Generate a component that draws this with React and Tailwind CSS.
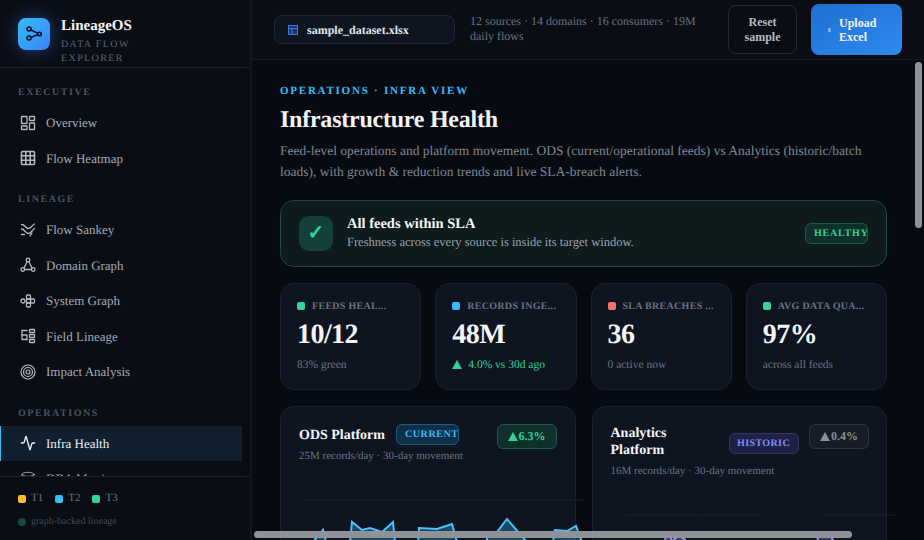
import React from "react";
import { Activity, Database, Server, Shield } from "lucide-react";

const Ico = ({ children, sw = 1.3 }) => (
  <svg width="16" height="16" viewBox="0 0 16 16" fill="none" stroke="currentColor" strokeWidth={sw} strokeLinecap="round" strokeLinejoin="round">
    {children}
  </svg>
);

const OverviewIcon = () => (
  <Ico>
    <rect x="1.500" y="1.500" width="5.500" height="7" rx="0.600" />
    <rect x="9.500" y="1.500" width="5" height="4" rx="0.600" />
    <rect x="9.500" y="8" width="5" height="6.500" rx="0.600" />
    <rect x="1.500" y="11" width="5.500" height="3.500" rx="0.600" />
  </Ico>
);

const HeatmapIcon = () => (
  <Ico sw={1.6}>
    <rect x="1.500" y="1.500" width="13" height="13" rx="1" />
    <path d="M5.800 1.500v13M10.200 1.500v13M1.500 5.800h13M1.500 10.200h13" />
  </Ico>
);

const SankeyIcon = () => (
  <Ico>
    <path d="M1.500 2.500c4 0 4 4 7 4s3-3 6-4.500" />
    <path d="M1.500 7c3 0 4 4.500 7 4.500s3-3 6-5" />
    <path d="M1.500 12.500h3M12 11l-2 3" />
  </Ico>
);

const DomainIcon = () => (
  <Ico>
    <circle cx="8" cy="3" r="1.800" />
    <circle cx="2.800" cy="12.500" r="1.800" />
    <circle cx="13.200" cy="12.500" r="1.800" />
    <path d="M7 5 4 11M9 5l3 6M5 12.500h6" />
  </Ico>
);

const SystemIcon = () => (
  <Ico>
    <circle cx="3" cy="8" r="2" />
    <rect x="6.500" y="2" width="4" height="4" rx="1" />
    <rect x="6.500" y="6" width="4" height="4" rx="1" />
    <rect x="6.500" y="10" width="4" height="4" rx="1" />
    <rect x="10.500" y="6" width="4" height="4" rx="1" />
  </Ico>
);

const FieldIcon = () => (
  <Ico>
    <path d="M7 2.500H2v9h5" />
    <path d="M2 7h5v4.500" />
    <rect x="9.500" y="1.500" width="5" height="3" rx="0.500" />
    <rect x="9.500" y="6.500" width="5" height="3" rx="0.500" />
    <rect x="9.500" y="11.500" width="5" height="3" rx="0.500" />
  </Ico>
);

const ImpactIcon = () => (
  <Ico sw={1.2}>
    <circle cx="8" cy="8" r="7" />
    <circle cx="8" cy="8" r="4.500" />
    <circle cx="8" cy="8" r="2" />
  </Ico>
);

const Triangle = ({ className }) => (
  <svg width="10" height="9" viewBox="0 0 10 9" className={className}>
    <path d="M5 0 10 9H0Z" fill="currentColor" />
  </svg>
);

const navGroups = [
  {
    label: "EXECUTIVE",
    items: [
      { name: "Overview", icon: <OverviewIcon /> },
      { name: "Flow Heatmap", icon: <HeatmapIcon /> },
    ],
  },
  {
    label: "LINEAGE",
    items: [
      { name: "Flow Sankey", icon: <SankeyIcon /> },
      { name: "Domain Graph", icon: <DomainIcon /> },
      { name: "System Graph", icon: <SystemIcon /> },
      { name: "Field Lineage", icon: <FieldIcon /> },
      { name: "Impact Analysis", icon: <ImpactIcon /> },
    ],
  },
  {
    label: "OPERATIONS",
    items: [
      { name: "Infra Health", icon: <Activity size={16} strokeWidth={2} />, active: true },
      { name: "DBA Metrics", icon: <Database size={16} strokeWidth={1.3} /> },
      { name: "Feed Monitor", icon: <Server size={16} strokeWidth={1.3} /> },
      { name: "Governance", icon: <Shield size={16} strokeWidth={1.3} /> },
    ],
  },
];

const kpis = [
  { label: "FEEDS HEAL...", value: "10/12", sub: "83% green", dot: "bg-[#34d399]" },
  { label: "RECORDS INGE...", value: "48M", sub: "4.0% vs 30d ago", dot: "bg-[#38bdf8]", up: true },
  { label: "SLA BREACHES ...", value: "36", sub: "0 active now", dot: "bg-[#f87171]" },
  { label: "AVG DATA QUA...", value: "97%", sub: "across all feeds", dot: "bg-[#34d399]" },
];

const odsShapes = [
  "14,62 24,50 27,62",
  "51,62 53,42 63,50 71,48 83,52 94,42 96,62",
  "119,62 120,48 138,49 153,44 158,62",
  "188,62 188,53 198,52 208,39 228,62",
  "254,62 256,50 268,51 277,46 283,62",
];

const analyticsShapes = ["54,44 56,37 61,44", "62,44 68,40 75,44", "206,44 209,39 219,39 222,44"];

const Legend = ({ color, label }) => (
  <span className="flex items-center gap-[5px]">
    <span className={`w-2 h-2 rounded-[2px] ${color}`} />
    {label}
  </span>
);

export default function App() {
  return (
    <div className="flex w-[924px] h-[540px] overflow-hidden bg-[#070b11] text-white font-['Liberation_Serif',serif] [text-rendering:geometricPrecision]">
      {/* Sidebar */}
      <aside className="flex flex-col w-[252px] shrink-0 bg-[#0a0d14] border-r-2 border-[#111722]">
        <div className="flex gap-[11px] h-[68px] shrink-0 pl-[18px] pt-[18px] border-b border-[#1a202c] overflow-hidden">
          <div className="flex items-center justify-center w-8 h-8 shrink-0 rounded-lg bg-gradient-to-br from-[#38bdf8] to-[#3b82f6] shadow-[0_0_18px_rgba(59,130,246,0.45)] text-[#0a1220]">
            <svg width="18" height="18" viewBox="0 0 18 18" fill="none" stroke="currentColor" strokeWidth="1.500">
              <circle cx="4" cy="4" r="2" />
              <circle cx="4" cy="13" r="2" />
              <circle cx="14.500" cy="9" r="1.800" />
              <path d="m6 5 6.500 3.200M6 12.500 12.700 9.500" />
            </svg>
          </div>
          <div className="-mt-[2px]">
            <div className="text-[15px] leading-[20px] font-bold text-[#f3f4f6]">LineageOS</div>
            <div className="mt-[2px] w-[90px] text-[10px] leading-[13.500px] tracking-[0.14em] text-[#5b6472]">DATA FLOW EXPLORER</div>
          </div>
        </div>

        <nav className="flex-1 overflow-hidden pt-[18px] border-r-8 border-[#080b11]">
          {navGroups.map((group) => (
            <div key={group.label} className="mb-[17.100px]">
              <div className="pl-[18px] h-[14px] leading-[14px] mb-[5px] text-[10px] font-bold tracking-[0.155em] text-[#4b5360]">{group.label}</div>
              {group.items.map((item) => (
                <div
                  key={item.name}
                  className={`flex items-center gap-[10px] h-[35.500px] pl-[19px] text-[13px] border-l ${
                    item.active ? "bg-[#10202f] border-[#38bdf8] text-[#e8edf3]" : "border-transparent text-[#a3aab5]"
                  }`}
                >
                  <span className={item.active ? "text-[#e8edf3]" : "text-[#b4bac3]"}>{item.icon}</span>
                  {item.name}
                </div>
              ))}
            </div>
          ))}
        </nav>

        <div className="h-[64px] shrink-0 border-t border-[#1a202c] pl-[18px] pt-[15px]">
          <div className="flex gap-3 text-[11px] leading-[13px] text-[#6b7280]">
            <Legend color="bg-[#fbbf24]" label="T1" />
            <Legend color="bg-[#38bdf8]" label="T2" />
            <Legend color="bg-[#34d399]" label="T3" />
          </div>
          <div className="flex items-center gap-[5px] mt-[10px] text-[10px] leading-[13px] text-[#414956]">
            <span className="w-2 h-2 rounded-full bg-[#0f4f40]" />
            graph-backed lineage
          </div>
        </div>
      </aside>

      <div className="flex flex-col flex-1 min-w-0">
        {/* Top bar */}
        <header className="flex items-center h-[60px] shrink-0 pl-[22px] bg-[#0a0d14] border-b border-[#161c27]">
          <div className="flex items-center gap-[9px] w-[181px] h-[29px] shrink-0 pl-[13px] rounded-lg bg-[#0f1520] border border-[#1e2633] text-[12px] font-bold text-[#e5e7eb]">
            <svg width="10" height="10" viewBox="0 0 10 10" fill="#1b3566" stroke="#3f74dd" strokeWidth="1">
              <rect x="0.500" y="0.500" width="9" height="9" />
              <path d="M0.500 3.500h9M4 3.500v6" />
            </svg>
            sample_dataset.xlsx
          </div>
          <p className="w-[240px] ml-[15px] -mt-[2px] shrink-0 text-[12px] leading-[15px] text-[#6b7280]">12 sources · 14 domains · 16 consumers · 19M daily flows</p>
          <button className="w-[69px] h-[49px] ml-[18px] shrink-0 rounded-lg border border-[#232a36] text-[12px] leading-[15px] font-bold text-[#b4bac3]">
            Reset<br />sample
          </button>
          <button className="flex items-center gap-2 w-[91px] h-[51px] ml-[14px] pl-[17px] shrink-0 rounded-lg bg-gradient-to-br from-[#1e6fd0] to-[#2f8af0] text-[12px] leading-[14px] font-bold text-left text-[#f3f4f6]">
            <span className="w-[3px] h-[4px] rounded-[1px] bg-[#7fb6f0]" />
            <span>Upload<br />Excel</span>
          </button>
        </header>

        {/* Main content; scrollbars are painted over it */}
        <div className="relative flex-1 min-h-0">
          <main className="h-full overflow-hidden">
            <div className="w-[736px] h-[1385px] pt-[24px] pl-[28px]">
              <div className="w-[607px]">
                <div className="text-[11px] leading-[14px] font-bold tracking-[0.16em] text-[#38bdf8]">OPERATIONS · INFRA VIEW</div>
                <h1 className="mt-[7px] text-[24px] leading-[30px] font-bold tracking-[-0.01em] text-[#f3f4f6]">Infrastructure Health</h1>
                <p className="mt-[6px] w-[600px] text-[13.500px] leading-[20.800px] text-[#7f8794]">
                  Feed-level operations and platform movement. ODS (current/operational feeds) vs Analytics (historic/batch loads), with growth &amp; reduction trends and live SLA-breach alerts.
                </p>

                {/* SLA banner */}
                <div className="flex items-center h-[67px] mt-[17.400px] pl-[18px] pr-[18px] rounded-[14px] bg-[#0e1a1c] border border-[#1d4a3c]">
                  <div className="flex items-center justify-center w-[34px] h-[35px] rounded-[10px] bg-[#14403a] text-[20px] font-bold text-[#34d399]">✓</div>
                  <div className="ml-[14px]">
                    <div className="text-[14.500px] leading-[18px] font-bold text-[#f3f4f6]">All feeds within SLA</div>
                    <div className="mt-[1px] text-[12.500px] leading-[17px] text-[#9ca3af]">Freshness across every source is inside its target window.</div>
                  </div>
                  <span className="flex items-center ml-auto w-[63px] h-[21px] pl-2 rounded-md bg-[#10302b] border border-[#1f5a48] text-[10px] font-bold tracking-[0.08em] whitespace-nowrap overflow-hidden text-[#34d399]">HEALTHY</span>
                </div>

                {/* KPI cards */}
                <div className="grid grid-cols-4 gap-[14px] mt-4">
                  {kpis.map((kpi) => (
                    <div key={kpi.label} className="h-[107px] pt-4 px-4 rounded-[14px] bg-[#0f1520] border border-[#1a212d] min-w-0">
                      <div className="flex items-center gap-[7px] text-[10px] leading-[13px] font-bold tracking-[0.03em] whitespace-nowrap text-[#6b7280]">
                        <span className={`w-2 h-2 shrink-0 rounded-[2px] ${kpi.dot}`} />
                        {kpi.label}
                      </div>
                      <div className="mt-[4px] text-[28px] leading-[36px] font-bold tracking-[-0.02em] text-[#f3f4f6]">{kpi.value}</div>
                      <div className={`flex items-center gap-[6px] mt-[5px] text-[11.500px] leading-[14px] ${kpi.up ? "text-[#34d399]" : "text-[#6b7280]"}`}>
                        {kpi.up && <Triangle />}
                        {kpi.sub}
                      </div>
                    </div>
                  ))}
                </div>

                {/* Platform cards */}
                <div className="grid grid-cols-2 gap-4 mt-4">
                  <div className="h-[400px] pt-[17px] px-[18px] rounded-[14px] bg-[#0f1520] border border-[#1a212d] min-w-0">
                    <div className="flex items-start">
                      <span className="mt-[2px] text-[14px] leading-[20px] font-bold text-[#f3f4f6] whitespace-nowrap">ODS Platform</span>
                      <span className="flex items-center w-[63px] h-[21px] ml-[11px] pl-2 rounded-md bg-[#10304a] border border-[#1f5a80] text-[10px] font-bold tracking-[0.06em] overflow-hidden text-[#38bdf8]">CURRENT</span>
                      <span className="flex items-center justify-center gap-px w-[60px] h-[25px] ml-auto rounded-md bg-[#10302b] border border-[#1f5a48] text-[12px] font-bold text-[#34d399]">
                        <Triangle />
                        6.3%
                      </span>
                    </div>
                    <div className="text-[11px] leading-[14px] text-[#6b7280]">25M records/day · 30-day movement</div>
                    <svg width="290" height="200" className="block mt-[17px] overflow-visible">
                      <line x1="6" y1="20" x2="286" y2="20" stroke="#1a212d" strokeWidth="1" strokeDasharray="40 2" />
                      {odsShapes.map((points) => (
                        <polyline key={points} points={points} fill="#38bdf8" fillOpacity="0.3" stroke="#4cc2fb" strokeWidth="2" />
                      ))}
                    </svg>
                  </div>

                  <div className="h-[400px] pt-[17px] px-[18px] rounded-[14px] bg-[#0f1520] border border-[#1a212d] min-w-0">
                    <div className="flex items-start">
                      <span className="w-[80px] mt-[1px] text-[14px] leading-[17.500px] font-bold text-[#f3f4f6]">Analytics Platform</span>
                      <span className="flex items-center justify-center w-[70px] h-[21px] mt-[9px] ml-[38px] rounded-md bg-[#1e2046] border border-[#33365f] text-[10px] font-bold tracking-[0.04em] text-[#818cf8]">HISTORIC</span>
                      <span className="flex items-center justify-center gap-px w-[60px] h-[25px] ml-auto -mr-px rounded-md bg-[#171c27] border border-[#2b3240] text-[12px] font-bold text-[#8a909b]">
                        <Triangle />
                        0.4%
                      </span>
                    </div>
                    <div className="mt-[4px] text-[11px] leading-[14px] text-[#6b7280]">16M records/day · 30-day movement</div>
                    <svg width="290" height="200" className="block mt-[18px] overflow-visible">
                      <line x1="14" y1="19" x2="284" y2="19" stroke="#1a212d" strokeWidth="1" strokeDasharray="76 2 60 60" />
                      {analyticsShapes.map((points) => (
                        <polyline key={points} points={points} fill="#a78bfa" fillOpacity="0.3" stroke="#a78bfa" strokeWidth="2" />
                      ))}
                    </svg>
                  </div>
                </div>
              </div>
            </div>
          </main>
          <div className="absolute top-[2px] right-[2px] w-[7px] h-[166px] rounded bg-[#8f9297]" />
          <div className="absolute bottom-[2px] left-[2px] w-[598px] h-[7px] rounded bg-[#8f9297]" />
        </div>
      </div>
    </div>
  );
}
